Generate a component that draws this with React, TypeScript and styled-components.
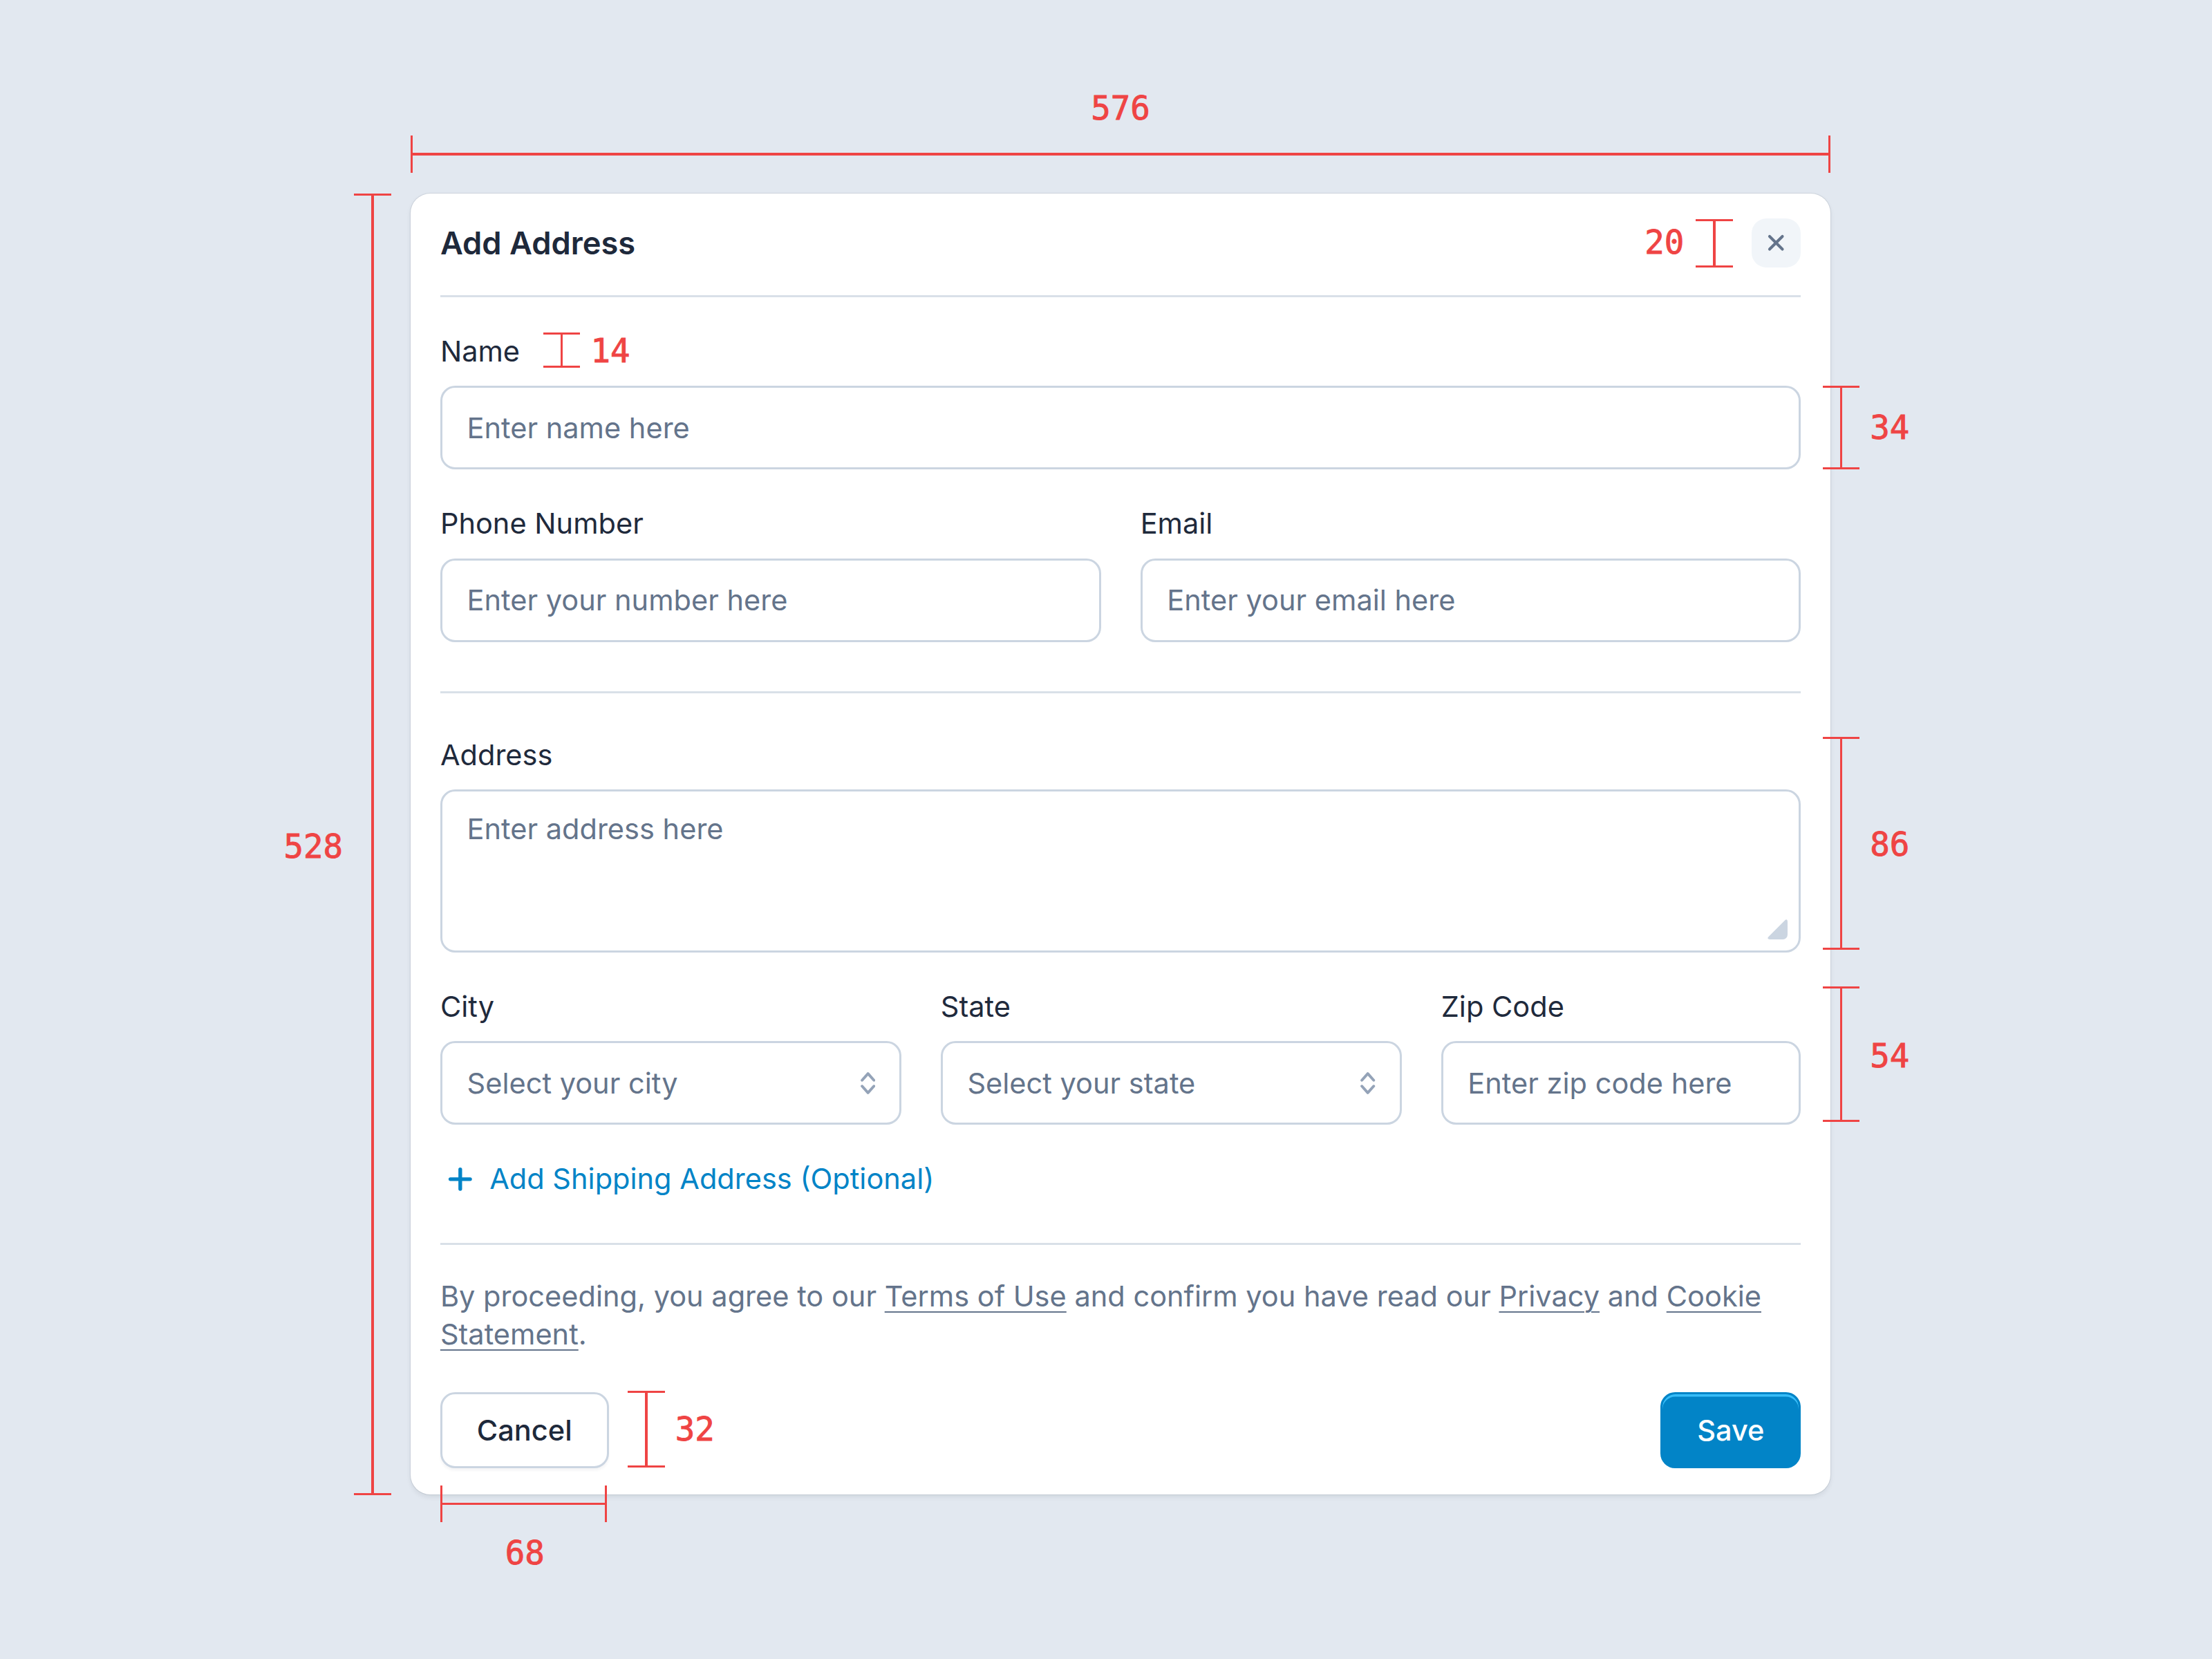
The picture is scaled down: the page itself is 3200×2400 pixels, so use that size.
import React from 'react';
import styled, { createGlobalStyle } from 'styled-components';

// the reference is the 576px-wide design blown up ~3.57x
const SCALE = 3.566;
const TEXT = '11.65px';

const GlobalStyle = createGlobalStyle`
  html, body {
    margin: 0;
    padding: 0;
    background: #e2e8f0;
  }
  body {
    font-family: Inter, "Noto Sans", sans-serif;
    -webkit-font-smoothing: antialiased;
  }
  * { box-sizing: border-box; }
`;

const Page = styled.div`
  zoom: ${SCALE};
  padding: 78.5px 0 30px 166.6px;
`;

const Stage = styled.div`
  position: relative;
  width: 576px;
`;

const Modal = styled.div`
  width: 576px;
  padding: 0 12px;
  background: #fff;
  border-radius: 8px;
  box-shadow: 0 1px 2px rgba(15, 23, 42, 0.08), 0 0 0 0.3px rgba(15, 23, 42, 0.08);
`;

const Header = styled.div`
  height: 42px;
  display: flex;
  align-items: center;
  justify-content: space-between;
  border-bottom: 1px solid #d9e0e8;
  padding-bottom: 1px;
`;

const Title = styled.h2`
  margin: 0;
  font-size: 12.7px;
  line-height: 16px;
  font-weight: 600;
  color: #1e293b;
`;

const CloseButton = styled.button`
  width: 20px;
  height: 20px;
  padding: 0;
  border: none;
  border-radius: 6px;
  background: #f1f5f9;
  color: #64748b;
  display: flex;
  align-items: center;
  justify-content: center;
  cursor: pointer;
`;

interface SectionProps {
  $top: number;
  $bottom: number;
  $divider?: boolean;
}

const Section = styled.div<SectionProps>`
  display: flex;
  flex-direction: column;
  gap: 14px;
  padding: ${({ $top, $bottom }) => `${$top}px 0 ${$bottom}px`};
  border-bottom: ${({ $divider }) => ($divider ? '1px solid #d9e0e8' : 'none')};
`;

const Row = styled.div<{ $cols: string }>`
  display: grid;
  grid-template-columns: ${({ $cols }) => $cols};
  gap: 16px;
`;

const FieldWrap = styled.label`
  display: flex;
  flex-direction: column;
  gap: 6px;
  min-width: 0;
`;

const Label = styled.span`
  font-size: ${TEXT};
  line-height: 16px;
  font-weight: 400;
  color: #1f2a3c;
`;

const controlBase = `
  width: 100%;
  border: 1px solid #cbd5e1;
  border-radius: 6px;
  background: #fff;
  font-family: Inter, "Noto Sans", sans-serif;
  font-size: ${TEXT};
  color: #64748b;
  outline: none;
  margin: 0;
`;

const Input = styled.input`
  ${controlBase}
  height: 34px;
  padding: 0 10px;

  &::placeholder {
    color: #64748b;
  }
`;

const TextAreaBox = styled.div`
  position: relative;
  height: 66px;
`;

const TextArea = styled.textarea`
  ${controlBase}
  display: block;
  height: 66px;
  padding: 8px 10px;
  line-height: 14.4px;
  resize: none;

  &::placeholder {
    color: #64748b;
  }
`;

const ResizeHandle = styled.svg`
  position: absolute;
  right: 5.4px;
  bottom: 5.3px;
  width: 8.4px;
  height: 8.4px;
  pointer-events: none;
`;

const SelectBox = styled.div`
  position: relative;
`;

const Select = styled.select`
  ${controlBase}
  height: 34px;
  padding: 0 24px 0 10px;
  appearance: none;
  -webkit-appearance: none;
`;

const SelectIcon = styled.svg`
  position: absolute;
  right: 10.6px;
  top: 50%;
  width: 6px;
  height: 10.4px;
  transform: translateY(-50%);
  pointer-events: none;
`;

const AddLink = styled.a`
  display: inline-flex;
  align-items: center;
  gap: 7px;
  align-self: flex-start;
  height: 16px;
  padding-left: 3px;
  font-size: ${TEXT};
  line-height: 16px;
  font-weight: 400;
  color: #0284c7;
  text-decoration: none;
  cursor: pointer;
`;

const Footer = styled.div`
  padding: 13px 0 10.5px;
`;

const Terms = styled.p`
  margin: 0;
  font-size: ${TEXT};
  line-height: 15.5px;
  color: #64748b;

  a {
    color: inherit;
    text-decoration: underline;
    text-decoration-thickness: 0.6px;
    text-underline-offset: 2px;
  }
`;

const Actions = styled.div`
  display: flex;
  justify-content: space-between;
  margin-top: 15.5px;
`;

const Button = styled.button<{ $primary?: boolean }>`
  height: 31px;
  padding: 0 14px;
  border-radius: 6px;
  font-family: Inter, "Noto Sans", sans-serif;
  font-size: ${TEXT};
  font-weight: 500;
  cursor: pointer;
  border: 1px solid ${({ $primary }) => ($primary ? '#0284c7' : '#cbd5e1')};
  background: ${({ $primary }) => ($primary ? '#0284c7' : '#fff')};
  color: ${({ $primary }) => ($primary ? '#fff' : '#1e293b')};
  box-shadow: ${({ $primary }) =>
    $primary ? 'inset 0 1px 0 #38bdf8' : '0 1px 1px rgba(15, 23, 42, 0.04)'};
`;

/* red measurement overlay */

const RED = '#ef4444';

const VDim = styled.div<{ $x: number; $top: number; $h: number }>`
  position: absolute;
  left: ${({ $x }) => $x - 7.5}px;
  top: ${({ $top }) => $top}px;
  width: 15px;
  height: ${({ $h }) => $h}px;
  border-top: 1px solid ${RED};
  border-bottom: 1px solid ${RED};

  &::before {
    content: '';
    position: absolute;
    left: 7px;
    top: 0;
    bottom: 0;
    width: 1px;
    background: ${RED};
  }
`;

const HDim = styled.div<{ $y: number; $left: number; $w: number }>`
  position: absolute;
  top: ${({ $y }) => $y - 7.5}px;
  left: ${({ $left }) => $left}px;
  width: ${({ $w }) => $w}px;
  height: 15px;
  border-left: 1px solid ${RED};
  border-right: 1px solid ${RED};

  &::before {
    content: '';
    position: absolute;
    top: 7px;
    left: 0;
    right: 0;
    height: 1px;
    background: ${RED};
  }
`;

const DimLabel = styled.span<{ $x: number; $y: number }>`
  position: absolute;
  left: ${({ $x }) => $x}px;
  top: ${({ $y }) => $y}px;
  transform: translate(-50%, -50%);
  font-family: "DejaVu Sans Mono", "Liberation Mono", monospace;
  font-size: 13.3px;
  line-height: 1;
  color: ${RED};
  -webkit-text-stroke: 0.25px ${RED};
  white-space: nowrap;
`;

const CloseIcon = () => (
  <svg width="8" height="8" viewBox="0 0 8 8" fill="none">
    <path
      d="M1.4 1.4 6.6 6.6M6.6 1.4 1.4 6.6"
      stroke="currentColor"
      strokeWidth="1.15"
      strokeLinecap="round"
    />
  </svg>
);

const PlusIcon = () => (
  <svg width="10" height="10" viewBox="0 0 10 10" fill="none">
    <path d="M5 1v8M1 5h8" stroke="#0284c7" strokeWidth="1.5" strokeLinecap="round" />
  </svg>
);

interface FieldProps {
  label: string;
  placeholder: string;
}

const TextField = ({ label, placeholder }: FieldProps) => (
  <FieldWrap>
    <Label>{label}</Label>
    <Input placeholder={placeholder} />
  </FieldWrap>
);

const SelectField = ({ label, placeholder }: FieldProps) => (
  <FieldWrap>
    <Label>{label}</Label>
    <SelectBox>
      <Select defaultValue="">
        <option value="" disabled>
          {placeholder}
        </option>
      </Select>
      <SelectIcon viewBox="0 0 6 10.4" fill="none">
        <path
          d="M0.6 4 3 1.3 5.4 4M0.6 6.4 3 9.1 5.4 6.4"
          stroke="#94a3b8"
          strokeWidth="1.1"
          strokeLinecap="round"
          strokeLinejoin="round"
        />
      </SelectIcon>
    </SelectBox>
  </FieldWrap>
);

export default function App() {
  return (
    <>
      <GlobalStyle />
      <Page>
        <Stage>
          <Modal>
            <Header>
              <Title>Add Address</Title>
              <CloseButton aria-label="Close">
                <CloseIcon />
              </CloseButton>
            </Header>

            <Section $top={14} $bottom={20} $divider>
              <TextField label="Name" placeholder="Enter name here" />
              <Row $cols="1fr 1fr">
                <TextField label="Phone Number" placeholder="Enter your number here" />
                <TextField label="Email" placeholder="Enter your email here" />
              </Row>
            </Section>

            <Section $top={17} $bottom={18} $divider>
              <FieldWrap>
                <Label>Address</Label>
                <TextAreaBox>
                  <TextArea placeholder="Enter address here" />
                  <ResizeHandle viewBox="0 0 9 9">
                    <path
                      d="M7.9 0.7C8.5 0.1 9 0.5 9 1.3V7A2 2 0 0 1 7 9H1.3C0.5 9 0.1 8.5 0.7 7.9Z"
                      fill="#cbd5e1"
                    />
                  </ResizeHandle>
                </TextAreaBox>
              </FieldWrap>
              <Row $cols="1fr 1fr 146px">
                <SelectField label="City" placeholder="Select your city" />
                <SelectField label="State" placeholder="Select your state" />
                <TextField label="Zip Code" placeholder="Enter zip code here" />
              </Row>
              <AddLink>
                <PlusIcon />
                Add Shipping Address (Optional)
              </AddLink>
            </Section>

            <Footer>
              <Terms>
                By proceeding, you agree to our <a>Terms of Use</a> and confirm you have read
                our <a>Privacy</a> and <a>Cookie Statement</a>.
              </Terms>
              <Actions>
                <Button>Cancel</Button>
                <Button $primary>Save</Button>
              </Actions>
            </Footer>
          </Modal>

          <HDim $y={-16} $left={0} $w={576} />
          <DimLabel $x={288} $y={-34.4}>576</DimLabel>

          <VDim $x={-15.5} $top={0} $h={528} />
          <DimLabel $x={-39.5} $y={265}>528</DimLabel>

          <VDim $x={528.8} $top={10.3} $h={19.7} />
          <DimLabel $x={508.6} $y={20}>20</DimLabel>

          <VDim $x={61.2} $top={56.5} $h={14.3} />
          <DimLabel $x={81} $y={64}>14</DimLabel>

          <VDim $x={580.3} $top={78} $h={34} />
          <DimLabel $x={600} $y={95}>34</DimLabel>

          <VDim $x={580.3} $top={220.3} $h={86.4} />
          <DimLabel $x={600} $y={264.3}>86</DimLabel>

          <VDim $x={580.3} $top={321.6} $h={55} />
          <DimLabel $x={600} $y={350}>54</DimLabel>

          <VDim $x={95.6} $top={485.8} $h={31} />
          <DimLabel $x={115.3} $y={501.3}>32</DimLabel>

          <HDim $y={531.6} $left={12} $w={67.5} />
          <DimLabel $x={46.3} $y={551.6}>68</DimLabel>
        </Stage>
      </Page>
    </>
  );
}
